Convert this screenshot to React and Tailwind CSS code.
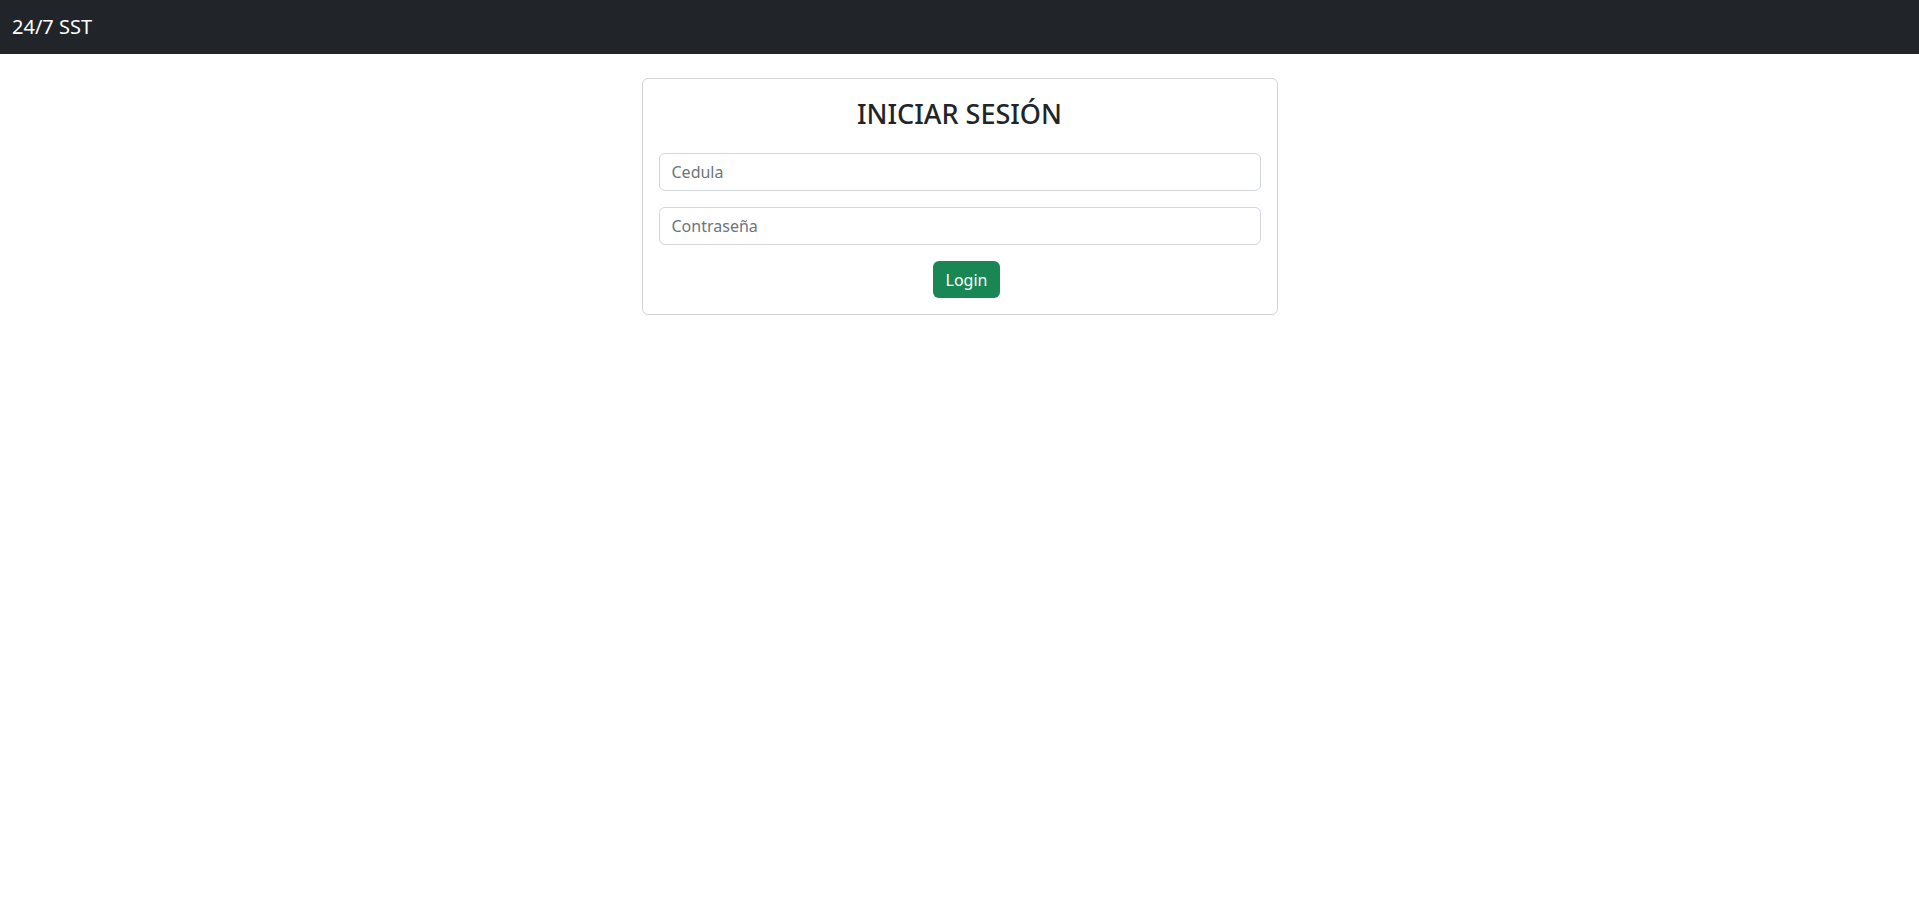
import React from "react";

export default function App() {
  return (
    <div className="min-h-[905px] bg-white text-[#212529]" style={{ fontFamily: '"Noto Sans", "Open Sans", sans-serif' }}>
      <nav className="h-[54px] bg-[#212529] flex items-center px-3">
        <span className="text-[20px] text-white leading-none">24/7 SST</span>
      </nav>
      <div className="max-w-[1320px] mx-auto px-3">
        <div className="w-[636px] mx-auto mt-6 border border-[#d3d4d5] rounded-md p-4">
          <h3 className="text-center text-[27px] font-medium leading-[33px] pt-[2px] mb-[23px] text-[#212529]">INICIAR SESIÓN</h3>
          <input
            type="text"
            placeholder="Cedula"
            className="block w-full h-[38px] border border-[#d3d7dc] rounded-md px-3 text-base text-[#212529] placeholder:text-[#6c757d] mb-4 outline-none"
          />
          <input
            type="password"
            placeholder="Contraseña"
            className="block w-full h-[38px] border border-[#d3d7dc] rounded-md px-3 text-base text-[#212529] placeholder:text-[#6c757d] mb-4 outline-none"
          />
          <div className="flex justify-center">
            <button className="h-[37px] px-[13px] bg-[#198754] text-white text-base rounded-md ml-[14px]">Login</button>
          </div>
        </div>
      </div>
    </div>
  );
}
